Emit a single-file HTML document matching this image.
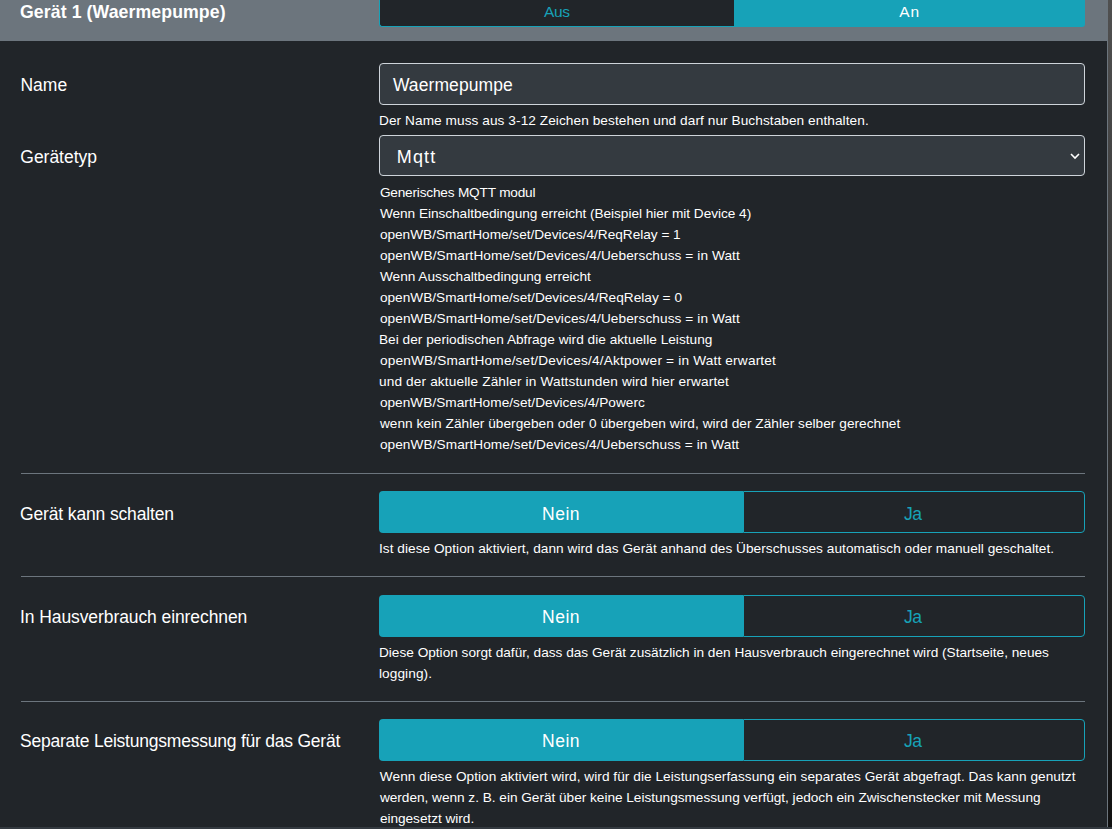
<!DOCTYPE html>
<html><head><meta charset="utf-8">
<style>
html,body{margin:0;padding:0;}
body{width:1112px;height:829px;overflow:hidden;position:relative;background:#212529;font-family:"Liberation Sans",sans-serif;color:#fff;}
.a{position:absolute;white-space:nowrap;}
.inp{position:absolute;left:379px;width:706px;background:#343a40;border:1px solid #ced4da;border-radius:4px;box-sizing:border-box;}
.hr{position:absolute;left:21px;width:1064px;height:1px;background:#6c757d;}
.bg{position:absolute;left:379px;width:706px;height:42px;}
.nein{position:absolute;left:0;top:0;width:364px;height:42px;background:#17a2b8;border-radius:4px 0 0 4px;}
.ja{position:absolute;left:364px;top:0;width:342px;height:42px;box-sizing:border-box;border:1px solid #17a2b8;border-radius:0 4px 4px 0;}
.bt{position:absolute;top:0;font-size:17.1px;line-height:42px;text-align:center;}
</style></head><body>
<div class="a" style="left:1108px;top:0;width:4px;height:829px;background:linear-gradient(#505050,#111111);"></div>
<div class="a" style="left:1107px;top:0;width:1px;height:827px;background:#6c757d;"></div>
<div class="a" style="left:0;top:0;width:1107px;height:41px;background:#6c757d;"></div>
<div class="a" style="left:0;top:827px;width:1112px;height:2px;background:#343a40;"></div>

<div class="a" style="left:379px;top:-10px;width:706px;height:37px;">
  <div style="position:absolute;left:0;top:0;width:355px;height:37px;box-sizing:border-box;border:1px solid #17a2b8;border-right:none;border-radius:0 0 0 3px;background:#212529;"></div>
  <div style="position:absolute;left:355px;top:0;width:351px;height:37px;background:#17a2b8;border-radius:0 0 3px 0;"></div>
</div>

<div class="inp" style="top:63px;height:42px;"></div>
<div class="inp" style="top:135px;height:41px;"></div>
<svg class="a" style="left:1069px;top:150px;" width="12" height="12" viewBox="0 0 12 12"><path d="M2 4 L6 8 L10 4" stroke="#fff" stroke-width="1.6" fill="none"/></svg>

<div class="hr" style="top:473px;"></div>
<div class="bg" style="top:491px;"><div class="nein"></div><div class="ja"></div></div>

<div class="hr" style="top:576px;"></div>
<div class="bg" style="top:595px;"><div class="nein"></div><div class="ja"></div></div>

<div class="hr" style="top:701px;"></div>
<div class="bg" style="top:719px;"><div class="nein"></div><div class="ja"></div></div>

<div class="a" style="left:20.00px;top:2px;font-size:17.7px;line-height:20px;letter-spacing:0.0900px;font-weight:bold;color:#fff;">Gerät 1 (Waermepumpe)</div>
<div class="a" style="left:20.39px;top:75px;font-size:17.5px;line-height:20px;letter-spacing:0.0600px;color:#fff;">Name</div>
<div class="a" style="left:20.34px;top:147px;font-size:17.5px;line-height:20px;letter-spacing:-0.0337px;color:#fff;">Gerätetyp</div>
<div class="a" style="left:20.00px;top:504px;font-size:17.5px;line-height:20px;letter-spacing:-0.1400px;color:#fff;">Gerät kann schalten</div>
<div class="a" style="left:20.00px;top:607px;font-size:17.5px;line-height:20px;letter-spacing:-0.0865px;color:#fff;">In Hausverbrauch einrechnen</div>
<div class="a" style="left:20.00px;top:731px;font-size:17.5px;line-height:20px;letter-spacing:-0.2226px;color:#fff;">Separate Leistungsmessung für das Gerät</div>
<div class="a" style="left:392.90px;top:75px;font-size:17.5px;line-height:20px;letter-spacing:0.0900px;color:#fff;">Waermepumpe</div>
<div class="a" style="left:396.78px;top:147px;font-size:18px;line-height:20px;letter-spacing:1.1400px;color:#fff;">Mqtt</div>
<div class="a" style="left:379.00px;top:111px;font-size:13.65px;line-height:20px;letter-spacing:0.0703px;color:#fff;">Der Name muss aus 3-12 Zeichen bestehen und darf nur Buchstaben enthalten.</div>
<div class="a" style="left:379.90px;top:183px;font-size:13.65px;line-height:20px;letter-spacing:-0.1929px;color:#fff;">Generisches MQTT modul</div>
<div class="a" style="left:379.90px;top:204px;font-size:13.65px;line-height:20px;letter-spacing:-0.0375px;color:#fff;">Wenn Einschaltbedingung erreicht (Beispiel hier mit Device 4)</div>
<div class="a" style="left:379.90px;top:225px;font-size:13.65px;line-height:20px;letter-spacing:-0.0129px;color:#fff;">openWB/SmartHome/set/Devices/4/ReqRelay = 1</div>
<div class="a" style="left:379.90px;top:246px;font-size:13.65px;line-height:20px;letter-spacing:0.0865px;color:#fff;">openWB/SmartHome/set/Devices/4/Ueberschuss = in Watt</div>
<div class="a" style="left:379.90px;top:267px;font-size:13.65px;line-height:20px;letter-spacing:0.0116px;color:#fff;">Wenn Ausschaltbedingung erreicht</div>
<div class="a" style="left:379.90px;top:288px;font-size:13.65px;line-height:20px;letter-spacing:0.0171px;color:#fff;">openWB/SmartHome/set/Devices/4/ReqRelay = 0</div>
<div class="a" style="left:379.90px;top:309px;font-size:13.65px;line-height:20px;letter-spacing:0.0865px;color:#fff;">openWB/SmartHome/set/Devices/4/Ueberschuss = in Watt</div>
<div class="a" style="left:379.00px;top:330px;font-size:13.65px;line-height:20px;letter-spacing:0.0233px;color:#fff;">Bei der periodischen Abfrage wird die aktuelle Leistung</div>
<div class="a" style="left:379.90px;top:351px;font-size:13.65px;line-height:20px;letter-spacing:0.1800px;color:#fff;">openWB/SmartHome/set/Devices/4/Aktpower = in Watt erwartet</div>
<div class="a" style="left:379.00px;top:372px;font-size:13.65px;line-height:20px;letter-spacing:0.1366px;color:#fff;">und der aktuelle Zähler in Wattstunden wird hier erwartet</div>
<div class="a" style="left:379.90px;top:393px;font-size:13.65px;line-height:20px;letter-spacing:0.0300px;color:#fff;">openWB/SmartHome/set/Devices/4/Powerc</div>
<div class="a" style="left:379.90px;top:414px;font-size:13.65px;line-height:20px;letter-spacing:0.0400px;color:#fff;">wenn kein Zähler übergeben oder 0 übergeben wird, wird der Zähler selber gerechnet</div>
<div class="a" style="left:379.90px;top:435px;font-size:13.65px;line-height:20px;letter-spacing:0.0741px;color:#fff;">openWB/SmartHome/set/Devices/4/Ueberschuss = in Watt</div>
<div class="a" style="left:379.00px;top:539px;font-size:13.65px;line-height:20px;letter-spacing:0.0379px;color:#fff;">Ist diese Option aktiviert, dann wird das Gerät anhand des Überschusses automatisch oder manuell geschaltet.</div>
<div class="a" style="left:379.00px;top:643px;font-size:13.65px;line-height:20px;letter-spacing:-0.0033px;color:#fff;">Diese Option sorgt dafür, dass das Gerät zusätzlich in den Hausverbrauch eingerechnet wird (Startseite, neues</div>
<div class="a" style="left:379.00px;top:664px;font-size:13.65px;line-height:20px;letter-spacing:0.0788px;color:#fff;">logging).</div>
<div class="a" style="left:379.85px;top:767px;font-size:13.65px;line-height:20px;letter-spacing:0.0458px;color:#fff;">Wenn diese Option aktiviert wird, wird für die Leistungserfassung ein separates Gerät abgefragt. Das kann genutzt</div>
<div class="a" style="left:379.90px;top:788px;font-size:13.65px;line-height:20px;letter-spacing:-0.0192px;color:#fff;">werden, wenn z. B. ein Gerät über keine Leistungsmessung verfügt, jedoch ein Zwischenstecker mit Messung</div>
<div class="a" style="left:379.90px;top:809px;font-size:13.65px;line-height:20px;letter-spacing:-0.0300px;color:#fff;">eingesetzt wird.</div>
<div class="a" style="left:544.11px;top:2px;font-size:15.5px;line-height:20px;letter-spacing:-0.4050px;color:#17a2b8;">Aus</div>
<div class="a" style="left:899.37px;top:2px;font-size:15.5px;line-height:20px;letter-spacing:0.9000px;color:#fff;">An</div>
<div class="a" style="left:542.05px;top:504px;font-size:17.5px;line-height:20px;letter-spacing:0.4800px;color:#fff;">Nein</div>
<div class="a" style="left:903.90px;top:504px;font-size:17.5px;line-height:20px;letter-spacing:-0.4500px;color:#17a2b8;">Ja</div>
<div class="a" style="left:542.05px;top:607px;font-size:17.5px;line-height:20px;letter-spacing:0.4800px;color:#fff;">Nein</div>
<div class="a" style="left:903.90px;top:607px;font-size:17.5px;line-height:20px;letter-spacing:-0.4500px;color:#17a2b8;">Ja</div>
<div class="a" style="left:542.05px;top:731px;font-size:17.5px;line-height:20px;letter-spacing:0.4800px;color:#fff;">Nein</div>
<div class="a" style="left:903.90px;top:731px;font-size:17.5px;line-height:20px;letter-spacing:-0.4500px;color:#17a2b8;">Ja</div>
</body></html>
